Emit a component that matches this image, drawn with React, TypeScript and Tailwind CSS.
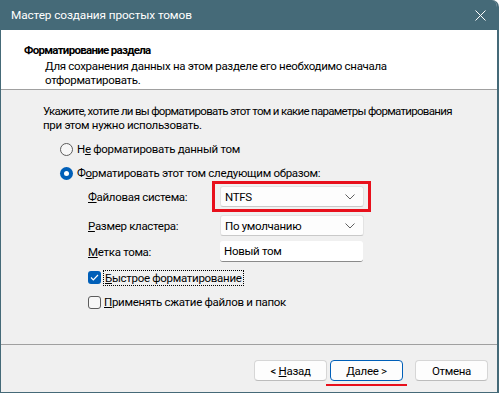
import React from 'react';

const font = { fontFamily: 'Roboto, "Liberation Sans", sans-serif' };

const Chevron = () => (
    <svg width="10" height="6" viewBox="0 0 10 6" className="text-[#606060]">
        <path d="M0.5 0.5 L5 5 L9.5 0.5" fill="none" stroke="currentColor" strokeWidth="1" />
    </svg>
);

const Select = ({ value }: { value: string }) => (
    <div className="w-[144px] h-[21px] flex items-center justify-between pl-[4px] pr-[8px] bg-[#fdfdfd] border border-[#e3e3e3] border-b-[#c9c9c9] rounded-[3px]">
        <span>{value}</span>
        <Chevron />
    </div>
);

const Radio = ({ checked }: { checked?: boolean }) =>
    checked ? (
        <div className="w-[13px] h-[13px] rounded-full bg-[#005fb8] flex items-center justify-center">
            <div className="w-[5px] h-[5px] rounded-full bg-white" />
        </div>
    ) : (
        <div className="w-[13px] h-[13px] rounded-full border border-[#5c5c5c] bg-[#f7f7f7]" />
    );

const Check = ({ checked }: { checked?: boolean }) =>
    checked ? (
        <div className="w-[13px] h-[13px] rounded-[3px] bg-[#005fb8] flex items-center justify-center">
            <svg width="9" height="7" viewBox="0 0 9 7">
                <path d="M1 3.5 L3.3 5.8 L8 1" fill="none" stroke="white" strokeWidth="1.2" />
            </svg>
        </div>
    ) : (
        <div className="w-[13px] h-[13px] rounded-[3px] border border-[#5c5c5c] bg-[#f7f7f7]" />
    );

const Button = ({ children, primary }: { children: React.ReactNode; primary?: boolean }) => (
    <div
        className={`w-[73px] h-[21px] flex items-center justify-center rounded-[4px] bg-[#fdfdfd] ${
            primary ? 'border border-[#005fb8]' : 'border border-[#d6d6d6] border-b-[#bcbcbc]'
        }`}
    >
        {children}
    </div>
);

export default function App() {
    return (
        <div
            style={font}
            className="w-[499px] h-[393px] flex flex-col bg-[#f0f0f0] border-l border-r-2 border-b border-[#456a78] rounded-tr-[7px] overflow-hidden text-[11.5px] tracking-[-0.3px] leading-[14px] text-black"
        >
            {/* Title bar */}
            <div className="h-[30px] shrink-0 bg-[#456a78] flex items-center justify-between pl-[10px] pr-[11px] text-white">
                <span className="text-[11.8px] tracking-[-0.1px]">Мастер создания простых томов</span>
                <svg width="11" height="11" viewBox="0 0 11 11">
                    <path d="M0.5 0.5 L10.5 10.5 M10.5 0.5 L0.5 10.5" stroke="white" strokeWidth="1" />
                </svg>
            </div>

            {/* Header */}
            <div className="h-[60px] shrink-0 bg-white border-b border-[#a0a0a0] pl-[23px] pt-[12px]">
                <div className="font-bold leading-[16px] tracking-[-0.7px]">Форматирование раздела</div>
                <div className="pl-[21px] pt-[1px]">
                    Для сохранения данных на этом разделе его необходимо сначала
                    <br />
                    отформатировать.
                </div>
            </div>

            {/* Body */}
            <div className="flex-1 pl-[42px] pt-[14px]">
                <div className="whitespace-nowrap">
                    <span className="tracking-[-0.7px]">
                        Укажите, хотите ли вы форматировать этот том и какие параметры форматирования
                    </span>
                    <br />
                    при этом нужно использовать.
                </div>
                <div className="pl-[17px] mt-[9px] flex items-center gap-[4px] h-[16px]">
                    <Radio />
                    <span>
                        Н<u>е</u> форматировать данный том
                    </span>
                </div>
                <div className="pl-[17px] mt-[8px] flex items-center gap-[4px] h-[16px]">
                    <Radio checked />
                    <span>
                        Ф<u>о</u>рматировать этот том следующим образом:
                    </span>
                </div>

                <div className="pl-[45px] mt-[5px] flex flex-col">
                    <div className="flex items-center">
                        <span className="w-[132px]">
                            <u>Ф</u>айловая система:
                        </span>
                        <div className="relative">
                            <Select value="NTFS" />
                            <div className="absolute -left-[8px] -right-[7px] -top-[5px] -bottom-[5px] border-[3px] border-[#e8101c]" />
                        </div>
                    </div>
                    <div className="flex items-center mt-[8px]">
                        <span className="w-[132px]">
                            <u>Р</u>азмер кластера:
                        </span>
                        <Select value="По умолчанию" />
                    </div>
                    <div className="flex items-center mt-[5px]">
                        <span className="w-[132px]">
                            <u>М</u>етка тома:
                        </span>
                        <div className="w-[143px] h-[21px] flex items-center pl-[4px] bg-white border-b border-[#8a8a8a] rounded-[3px]">
                            Новый том
                        </div>
                    </div>
                </div>

                <div className="pl-[45px] mt-[7px] flex items-center gap-[2px] h-[17px]">
                    <Check checked />
                    <span className="border border-dotted border-black px-[1px] leading-[14px]">
                        <u>Б</u>ыстрое форматирование
                    </span>
                </div>
                <div className="pl-[45px] mt-[8px] flex items-center gap-[3px] h-[16px]">
                    <Check />
                    <span>
                        <u>П</u>рименять сжатие файлов и папок
                    </span>
                </div>
            </div>

            {/* Footer */}
            <div className="h-[48px] shrink-0 border-t border-[#a0a0a0] flex items-start pt-[15px] pl-[253px]">
                <Button>
                    &lt;&nbsp;<u>Н</u>азад
                </Button>
                <div className="ml-[3px] relative">
                    <Button primary>
                        <span>
                            <u>Д</u>алее &gt;
                        </span>
                    </Button>
                    <div className="absolute -left-[4px] -right-[4px] top-[24px] h-[2px] bg-[#e8101c]" />
                </div>
                <div className="ml-[12px]">
                    <Button>Отмена</Button>
                </div>
            </div>
        </div>
    );
}
